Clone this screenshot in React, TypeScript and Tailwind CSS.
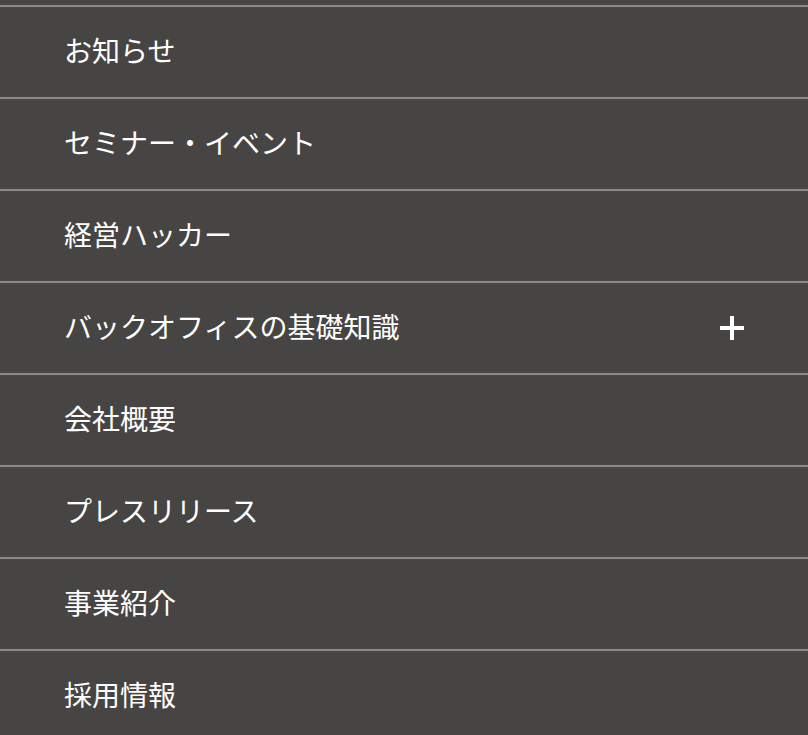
const items = [
  { label: 'お知らせ' },
  { label: 'セミナー・イベント' },
  { label: '経営ハッカー' },
  { label: 'バックオフィスの基礎知識', expandable: true },
  { label: '会社概要' },
  { label: 'プレスリリース' },
  { label: '事業紹介' },
  { label: '採用情報' },
]

function PlusIcon() {
  return (
    <svg width="24" height="24" viewBox="0 0 24 24" className="block">
      <rect x="10" y="0" width="4" height="24" fill="#fff" />
      <rect x="0" y="10" width="24" height="4" fill="#fff" />
    </svg>
  )
}

export default function App() {
  return (
    <div
      className="w-[808px] h-[735px] overflow-hidden bg-[#474543] pt-[5px]"
      style={{ fontFamily: '"Noto Sans CJK JP", "Noto Sans", sans-serif' }}
    >
      <ul>
        {items.map((item) => (
          <li key={item.label} className="border-t-2 border-[#8c8a88]">
            <a className="flex h-[90px] items-center justify-between pl-[64px] pr-[64px] text-[28px] text-white leading-none">
              <span className="-mt-[4px]">{item.label}</span>
              {item.expandable && <PlusIcon />}
            </a>
          </li>
        ))}
      </ul>
    </div>
  )
}
